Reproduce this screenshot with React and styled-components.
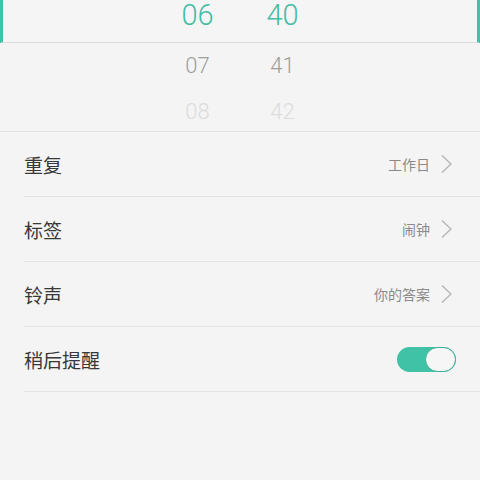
import React from 'react';
import styled, { createGlobalStyle } from 'styled-components';

const GlobalStyle = createGlobalStyle`
  html, body {
    margin: 0;
    padding: 0;
    background: #f4f4f4;
  }
  body {
    font-family: Roboto, "Noto Sans CJK SC", "Noto Sans", sans-serif;
    -webkit-font-smoothing: antialiased;
  }
`;

const ACCENT = '#3fc2a6';

const hours = ['07', '08'];
const minutes = ['41', '42'];

const settings = [
  { label: '重复', value: '工作日' },
  { label: '标签', value: '闹钟' },
  { label: '铃声', value: '你的答案' },
];

function Chevron() {
  return (
    <svg width="13" height="20" viewBox="0 0 13 20" fill="none">
      <path d="M2 1.5 L11 10 L2 18.5" stroke="#b4b4b4" strokeWidth="1.3" />
    </svg>
  );
}

function App() {
  return (
    <Page>
      <GlobalStyle />
      <SelectedBand>
        <Column>
          <SelectedNum>06</SelectedNum>
        </Column>
        <Column>
          <SelectedNum>40</SelectedNum>
        </Column>
      </SelectedBand>
      <Wheel>
        <Column>
          {hours.map((h, i) => (
            <WheelNum key={h} faded={i > 0}>
              {h}
            </WheelNum>
          ))}
        </Column>
        <Column>
          {minutes.map((m, i) => (
            <WheelNum key={m} faded={i > 0}>
              {m}
            </WheelNum>
          ))}
        </Column>
      </Wheel>
      <List>
        {settings.map((s) => (
          <Row key={s.label}>
            <Label>{s.label}</Label>
            <Value>
              {s.value}
              <Chevron />
            </Value>
          </Row>
        ))}
        <Row>
          <Label>稍后提醒</Label>
          <Toggle>
            <Knob />
          </Toggle>
        </Row>
      </List>
    </Page>
  );
}

const Page = styled.div`
  width: 480px;
  height: 480px;
  background: #f4f4f4;
  overflow: hidden;
`;

const SelectedBand = styled.div`
  display: flex;
  justify-content: center;
  height: 42px;
  border-left: 3px solid ${ACCENT};
  border-right: 3px solid ${ACCENT};
  border-bottom: 1px solid #dcdcdc;
  background: #f5f5f5;
`;

const Column = styled.div`
  display: flex;
  flex-direction: column;
  align-items: center;
  width: 85px;
`;

const SelectedNum = styled.div`
  font-family: Roboto, sans-serif;
  font-weight: 300;
  font-size: 29px;
  line-height: 30px;
  color: #45bda3;
`;

const Wheel = styled.div`
  display: flex;
  justify-content: center;
  height: 88px;
  overflow: hidden;
  border-bottom: 1px solid #e2e2e2;
`;

const WheelNum = styled.div`
  font-family: Roboto, sans-serif;
  font-weight: 300;
  font-size: 22px;
  height: 46px;
  line-height: 46px;
  color: ${(p) => (p.faded ? '#dcdcdc' : '#9e9e9e')};
`;

const List = styled.div`
  display: flex;
  flex-direction: column;
`;

const Row = styled.div`
  display: flex;
  align-items: center;
  justify-content: space-between;
  height: 64px;
  margin-left: 24px;
  padding-right: 24px;
  border-bottom: 1px solid #e4e4e4;
`;

const Label = styled.div`
  font-size: 19px;
  color: #383838;
  padding-top: 1px;
`;

const Value = styled.div`
  display: flex;
  align-items: center;
  gap: 10px;
  font-size: 14px;
  color: #8a8a8a;
  margin-right: 3px;
`;

const Toggle = styled.div`
  display: flex;
  justify-content: flex-end;
  width: 59px;
  height: 25px;
  border-radius: 13px;
  background: ${ACCENT};
  box-sizing: border-box;
`;

const Knob = styled.div`
  width: 31px;
  height: 25px;
  border-radius: 13px;
  background: #f6f6f6;
  border: 1px solid #3aae95;
  box-sizing: border-box;
`;

export default App;
